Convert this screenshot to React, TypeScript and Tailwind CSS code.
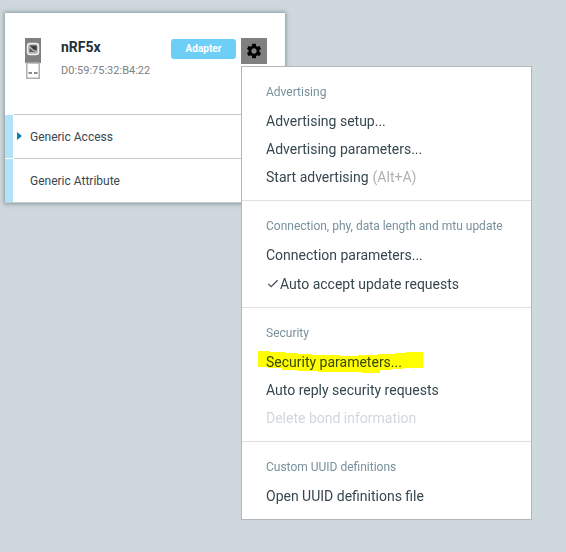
// App.tsx
import React from "react";
import { MdSettings } from "react-icons/md";

interface MenuItem {
  label: string;
  hint?: string;
  checked?: boolean;
  disabled?: boolean;
  marked?: boolean;
}

interface MenuSection {
  title: string;
  items: MenuItem[];
}

const sections: MenuSection[] = [
  {
    title: "Advertising",
    items: [
      { label: "Advertising setup..." },
      { label: "Advertising parameters..." },
      { label: "Start advertising", hint: "(Alt+A)" },
    ],
  },
  {
    title: "Connection, phy, data length and mtu update",
    items: [
      { label: "Connection parameters..." },
      { label: "Auto accept update requests", checked: true },
    ],
  },
  {
    title: "Security",
    items: [
      { label: "Security parameters...", marked: true },
      { label: "Auto reply security requests" },
      { label: "Delete bond information", disabled: true },
    ],
  },
  {
    title: "Custom UUID definitions",
    items: [{ label: "Open UUID definitions file" }],
  },
];

const services = [
  { name: "Generic Access", expandable: true },
  { name: "Generic Attribute", expandable: false },
];

const DongleIcon: React.FC = () => (
  <svg viewBox="0 0 16 41" className="h-[41px] w-4 shrink-0" aria-hidden="true">
    <rect width="16" height="25" fill="#808080" />
    <rect x="2.5" y="5.5" width="11" height="11" rx="2.5" fill="#b4b4b4" stroke="#f0f0f0" strokeWidth="1.4" />
    <path d="M4.5 7.5h7.2v5.2L8.500 11.500z" fill="#3c3c3c" />
    <path d="M4.500 10v4h6.500l-3-1z" fill="#5a5a5a" />
    <rect x="1.750" y="25" width="12.500" height="15.250" fill="#ffffff" stroke="#b0b0b0" strokeWidth="1.500" />
    <path d="M3.500 35h3.500M9 35h3.500" stroke="#8a8a8a" strokeWidth="2" />
  </svg>
);

const MenuRow: React.FC<{ item: MenuItem }> = ({ item }) => (
  <button
    role="menuitem"
    disabled={item.disabled}
    className="relative flex min-h-7 w-full items-center px-6 text-left text-sm text-[#37474f] disabled:text-[#cfd8dc]"
  >
    {item.checked && (
      <svg viewBox="0 0 14 14" className="my-2 h-[13px] w-[14px]" aria-hidden="true">
        <path d="M2 7.500 5 10.500 12 3.500" fill="none" stroke="#37474f" strokeWidth="1.200" />
      </svg>
    )}
    <span>{item.label}</span>
    {item.hint && <span className="ml-1 text-[#b0b0b0]">{item.hint}</span>}
    {item.marked && (
      <svg
        viewBox="0 0 165 22"
        className="pointer-events-none absolute top-[3px] left-4 h-[22px] w-[165px] mix-blend-multiply"
        aria-hidden="true"
      >
        <path
          d="M0 0H12V1H28V2H40V3H54V4H82V5H100V4H120V3H137V2H148V1H165V17H145V18H133V19H122V22H104V21H60V20H40V19H24V17H10V16H0Z"
          fill="#ffff00"
        />
      </svg>
    )}
  </button>
);

const OptionsMenu: React.FC = () => (
  <div
    role="menu"
    className="absolute top-full left-0 z-10 mt-0.5 w-[291px] divide-y divide-[#e0e0e0] border border-[#b0b8bc] bg-white"
  >
    {sections.map(section => (
      <div key={section.title} className="pt-4 pb-[9px]">
        <h3 className="mb-1.5 px-6 text-xs leading-[18px] text-[#78909c]">{section.title}</h3>
        {section.items.map(item => (
          <MenuRow key={item.label} item={item} />
        ))}
      </div>
    ))}
  </div>
);

const App: React.FC = () => {
  return (
    <div className="min-h-screen bg-[#cfd8dc] px-[5px] pt-[13px] font-[Roboto,sans-serif]">
      <div className="w-[280px] max-w-full bg-white shadow-[0_0_4px_1px_rgba(84,110,122,0.6)]">
        <div className="flex min-h-[101px] items-start pt-[25px] pr-[18px] pl-5">
          <DongleIcon />
          <div className="ml-5 flex-1">
            <h2 className="text-sm leading-[18px] font-bold text-[#263238]">nRF5x</h2>
            <p className="mt-[7px] text-[11px] leading-4 text-[#808080]">D0:59:75:32:B4:22</p>
          </div>
          <span className="mt-px h-5 w-[65px] rounded-[3px] bg-[#6dcff6] text-center text-[10px] leading-5 font-bold text-white">
            Adapter
          </span>
          <div className="relative ml-[5px]">
            <button
              aria-label="Adapter options"
              className="flex size-[26px] items-center justify-center bg-[#808080] text-black"
            >
              <MdSettings size={18} />
            </button>
            <OptionsMenu />
          </div>
        </div>
        <ul className="border-b border-[#c8c8c8]">
          {services.map(service => (
            <li key={service.name} className="flex h-11 text-xs text-[#37474f]">
              <span className="mt-px w-2 bg-[#b3e1f5]" />
              <span className="ml-px flex flex-1 items-center border-t border-[#c8c8c8]">
                <span className="flex w-4 pl-[3px]">
                  {service.expandable && (
                    <svg viewBox="0 0 5 8" className="mb-0.5 h-2 w-[5px]" aria-hidden="true">
                      <path d="M0 0 5 4 0 8Z" fill="#0080b7" />
                    </svg>
                  )}
                </span>
                {service.name}
              </span>
            </li>
          ))}
        </ul>
      </div>
    </div>
  );
};

export default App;
